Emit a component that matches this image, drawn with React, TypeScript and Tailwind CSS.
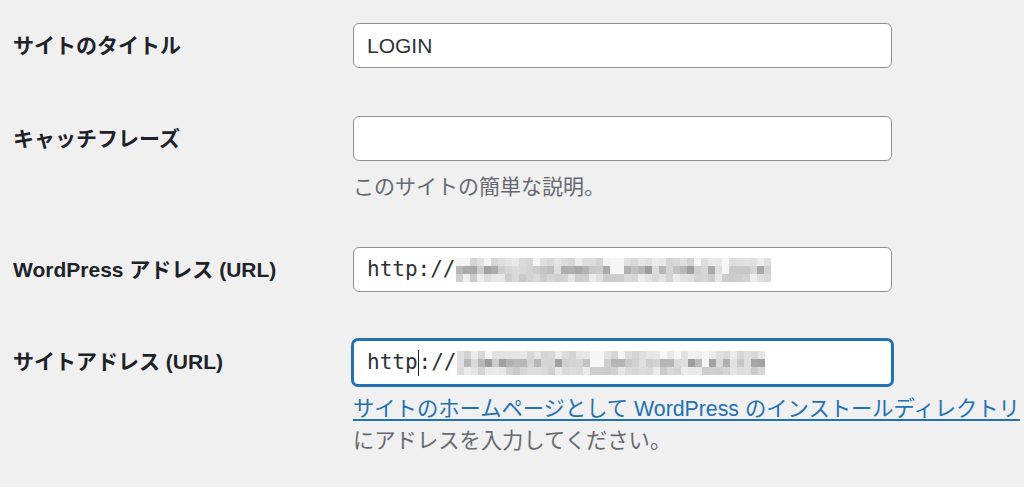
import React from "react";

// pixelated (blurred-out) part of the URL
function Mosaic({ seed, cols, dots }: { seed: number; cols: number; dots: number[] }) {
  let s = seed;
  const rnd = () => {
    s = (s * 9301 + 49297) % 233280;
    return s / 233280;
  };
  const cells: React.ReactNode[] = [];
  for (let r = 0; r < 3; r++) {
    for (let c = 0; c < cols; c++) {
      const base = r === 1 ? 190 : r === 0 ? 228 : 220;
      let v = Math.round(base + (rnd() - 0.5) * (r === 1 ? 70 : 36));
      if (dots.includes(c)) v = r === 2 ? 205 : 246;
      v = Math.max(125, Math.min(250, v));
      cells.push(
        <rect key={`${r}-${c}`} x={c * 7} y={r * 8} width={7} height={8} fill={`rgb(${v},${v},${v})`} />
      );
    }
  }
  return (
    <svg width={cols * 7} height={24} className="block shrink-0">
      {cells}
    </svg>
  );
}

function Label({ children }: { children: React.ReactNode }) {
  return (
    <div className="w-[340px] h-[45px] flex items-center shrink-0 text-[21px] font-bold text-[#1d2327] font-['Liberation_Sans','Noto_Sans_CJK_JP',sans-serif]">
      {children}
    </div>
  );
}

export default function App() {
  return (
    <div className="w-[1024px] h-[487px] overflow-hidden bg-[#f0f0f1] pl-[13px] pt-[23px] font-['Liberation_Sans','Noto_Sans_CJK_JP',sans-serif]">
      {/* site title */}
      <div className="flex">
        <Label>サイトのタイトル</Label>
        <div className="w-[539px] h-[45px] bg-white border border-[#8c8f94] rounded-[6px] flex items-center px-[13px] text-[21px] text-[#2c3338]">
          LOGIN
        </div>
      </div>

      {/* tagline */}
      <div className="flex mt-[48px]">
        <Label>キャッチフレーズ</Label>
        <div className="flex flex-col">
          <div className="w-[539px] h-[45px] bg-white border border-[#8c8f94] rounded-[6px]" />
          <p className="mt-[10px] text-[21px] leading-[32px] text-[#646970]">このサイトの簡単な説明。</p>
        </div>
      </div>

      {/* wordpress url */}
      <div className="flex mt-[44px]">
        <Label>WordPress アドレス (URL)</Label>
        <div className="w-[539px] h-[45px] bg-white border border-[#8c8f94] rounded-[6px] flex items-center px-[13px]">
          <span className="text-[21px] text-[#2c3338] font-['DejaVu_Sans_Mono',monospace]">http://</span>
          <Mosaic seed={17} cols={45} dots={[22, 23, 38]} />
        </div>
      </div>

      {/* site url (focused) */}
      <div className="flex mt-[47px]">
        <Label>サイトアドレス (URL)</Label>
        <div className="flex flex-col">
          <div className="w-[541px] h-[47px] -ml-px bg-white border-2 border-[#2271b1] rounded-[6px] shadow-[0_0_0_1px_#2271b1] flex items-center px-[13px]">
            <span className="text-[21px] text-[#2c3338] font-['DejaVu_Sans_Mono',monospace]">http</span>
            <span className="w-px h-[26px] bg-[#1d2327]" />
            <span className="text-[21px] text-[#2c3338] font-['DejaVu_Sans_Mono',monospace]">://</span>
            <Mosaic seed={53} cols={44} dots={[19, 20, 35]} />
          </div>
          <div className="mt-[7px] text-[21.3px] leading-[32px] text-[#646970] whitespace-nowrap">
            <a href="#" className="text-[#2271b1] underline underline-offset-[3px]">
              サイトのホームページとして WordPress のインストールディレクトリ
            </a>
            <br />
            にアドレスを入力してください。
          </div>
        </div>
      </div>
    </div>
  );
}
